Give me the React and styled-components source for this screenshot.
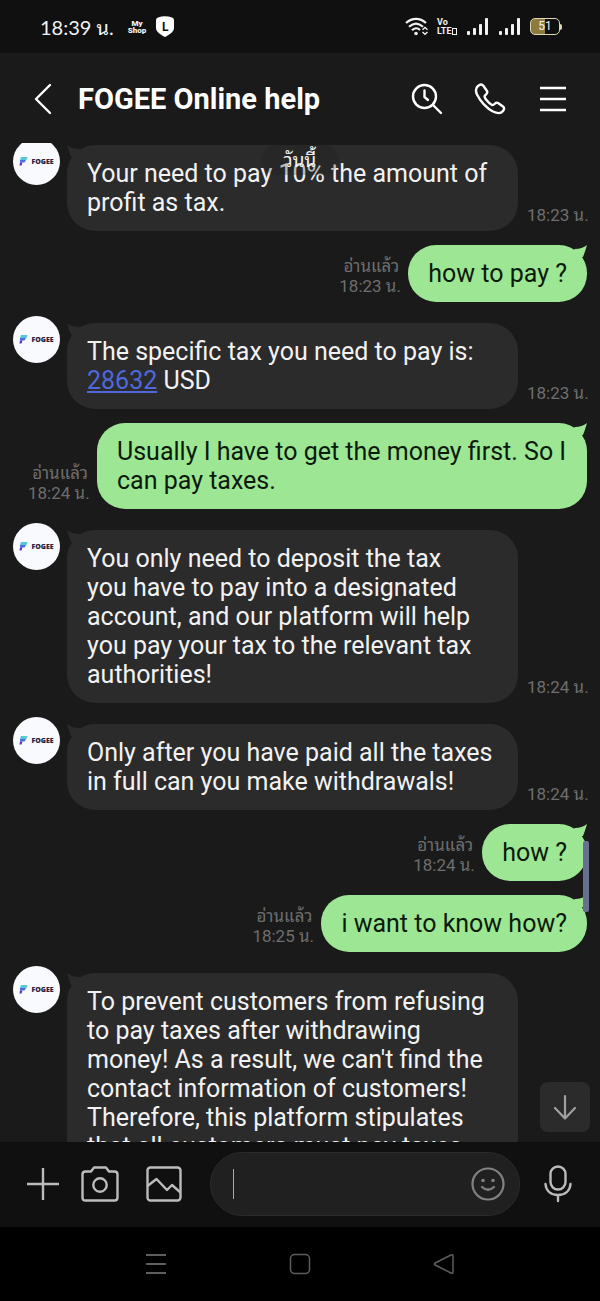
import React from "react";
import styled, { createGlobalStyle, css } from "styled-components";

const messages = [
  { id: 1, from: "them", time: "18:23 น.", text: "Your need to pay 10% the amount of profit as tax." },
  { id: 2, from: "me", time: "18:23 น.", text: "how to pay ?" },
  { id: 3, from: "them", time: "18:23 น.", text: "The specific tax you need to pay is: ", link: "28632", after: " USD" },
  { id: 4, from: "me", time: "18:24 น.", text: "Usually I have to get the money first. So I can pay taxes." },
  {
    id: 5,
    from: "them",
    time: "18:24 น.",
    text: "You only need to deposit the tax\nyou have to pay into a designated account, and our platform will help you pay your tax to the relevant tax authorities!",
  },
  { id: 6, from: "them", time: "18:24 น.", text: "Only after you have paid all the taxes in full can you make withdrawals!" },
  { id: 7, from: "me", time: "18:24 น.", text: "how ?" },
  { id: 8, from: "me", time: "18:25 น.", text: "i want to know how?" },
  {
    id: 9,
    from: "them",
    time: "18:25 น.",
    text: "To prevent customers from refusing to pay taxes after withdrawing money! As a result, we can't find the contact information of customers! Therefore, this platform stipulates that all customers must pay taxes",
  },
];

const Signal = () => (
  <svg width="23" height="18" viewBox="0 0 23 18" fill="#f2f2f2" aria-hidden="true">
    <rect x="1" y="13" width="3" height="4" rx="1" />
    <rect x="7" y="10" width="3" height="7" rx="1" />
    <rect x="13" y="6" width="3" height="11" rx="1" />
    <rect x="19" y="0" width="3" height="17" rx="1" />
  </svg>
);

const Wifi = () => (
  <svg width="23" height="19" viewBox="0 0 23 19" fill="none" stroke="#f2f2f2" strokeWidth="2.2" aria-hidden="true">
    <path d="M1 6C7 .4 15 .4 21 6" />
    <path d="M4 9.800C8.500 5.600 13.500 5.600 18 9.800" />
    <path d="M7 13.300C9.500 10.600 12.500 10.600 15 13" />
    <circle cx="11" cy="16.500" r="1.800" fill="#f2f2f2" stroke="none" />
    <path d="M17.500 12.700L20 10.500L22.500 12.700M17.500 15L20 17.200L22.500 15" strokeWidth="1.400" />
  </svg>
);

const Tail = ({ mine }) => (
  <TailSvg $mine={mine} width="20" height="16" viewBox="0 0 20 16" aria-hidden="true">
    {mine ? <path d="M6 6L8 4Q15 4 20 0Q18 7 16 12L8 12Z" /> : <path d="M14 6L12 4Q5 4 0 0Q2 7 4 12L12 12Z" />}
  </TailSvg>
);

const Logo = () => (
  <svg width="9" height="9" viewBox="0 0 9 9" aria-hidden="true">
    <path d="M2 0H8.500L7.500 3H1Z" fill="#54c8d8" />
    <path d="M1 3H7L5.500 5.500H1Z" fill="#4a6fe0" />
    <path d="M1 5.500H3.500L2.500 8.500H.5Z" fill="#5b32b8" />
  </svg>
);

const Message = ({ message }) => {
  const mine = message.from === "me";

  return (
    <Row $mine={mine}>
      {!mine && (
        <Avatar>
          <Logo />
          FOGEE
        </Avatar>
      )}
      <Bubble $mine={mine}>
        <Tail mine={mine} />
        {message.text}
        {message.link && <Link href={`#${message.link}`}>{message.link}</Link>}
        {message.after}
      </Bubble>
      <Meta $mine={mine}>
        {mine && <span>อ่านแล้ว</span>}
        <span>{message.time}</span>
      </Meta>
    </Row>
  );
};

const App = () => (
  <Page>
    <GlobalStyle />
    <StatusBar>
      <Clock>18:39 น.</Clock>
      <ShopMark>
        <span>My</span>
        <span>Shop</span>
      </ShopMark>
      <Shield>
        <svg width="18" height="21" viewBox="0 0 18 21" aria-hidden="true">
          <path d="M2 1.500Q9-1 16 1.500Q18 2 18 4V12C18 16 13 19 9 21C5 19 0 16 0 12V4Q0 2 2 1.500Z" fill="#fff" />
        </svg>
        <ShieldLetter>L</ShieldLetter>
      </Shield>
      <StatusIcons>
        <Wifi />
        <Volte>
          <span>Vo</span>
          <VolteLine>
            LTE
            <VolteBox />
          </VolteLine>
        </Volte>
        <Signal />
        <Signal />
        <Battery>
          <BatteryBody>51</BatteryBody>
          <BatteryTip />
        </Battery>
      </StatusIcons>
    </StatusBar>

    <Header>
      <IconButton aria-label="Back" $width={38}>
        <svg width="18" height="32" viewBox="0 0 18 32" fill="none" stroke="#fff" strokeWidth="2.4" strokeLinecap="round" strokeLinejoin="round">
          <path d="M16 2L2 16L16 30" />
        </svg>
      </IconButton>
      <Title>FOGEE Online help</Title>
      <HeaderActions>
        <IconButton aria-label="Search history" $width={32}>
          <svg width="32" height="32" viewBox="0 0 32 32" fill="none" stroke="#fff" strokeWidth="2.4" strokeLinecap="round" strokeLinejoin="round">
            <circle cx="13.500" cy="13.500" r="11.500" />
            <path d="M22 22L30 30M13.500 7.500V14L17 17" />
          </svg>
        </IconButton>
        <IconButton aria-label="Call" $width={32}>
          <svg width="32" height="32" viewBox="0 0 32 32" fill="none" stroke="#fff" strokeWidth="2.4" strokeLinejoin="round">
            <path d="M4 3C6.500 1 8 1 9.500 3L13 8C14 10 13 11 11 12.500C10 13.500 10.500 14.500 12 16.500C14 19 16 21 18 22C19.500 22.500 20 21.500 21 20.500C22 19.500 23 19.500 24 20L29 23.500C30.500 24.500 30.500 26 29 28C27 30.500 23 30.500 19 28.500C13 25.500 6 18 3 11.500C1.500 8 1.500 5 4 3Z" />
          </svg>
        </IconButton>
        <IconButton aria-label="Menu" $width={32}>
          <svg width="28" height="26" viewBox="0 0 28 26" fill="none" stroke="#fff" strokeWidth="2.4">
            <path d="M1 2H27M1 13H27M1 24H27" />
          </svg>
        </IconButton>
      </HeaderActions>
    </Header>

    <Chat>
      <DateBadge>วันนี้</DateBadge>
      <Messages>
        {messages.map((message) => (
          <Message key={message.id} message={message} />
        ))}
      </Messages>
      <ScrollThumb />
      <ScrollDown aria-label="Scroll to latest">
        <svg width="26" height="26" viewBox="0 0 26 26" fill="none" stroke="#a0a0a0" strokeWidth="2.2" strokeLinecap="round" strokeLinejoin="round">
          <path d="M13 2V24M3 14L13 24.500L23 14" />
        </svg>
      </ScrollDown>
    </Chat>

    <Composer>
      <Tools>
        <IconButton aria-label="Add" $width={36}>
          <svg width="34" height="34" viewBox="0 0 34 34" fill="none" stroke="#bcbcbc" strokeWidth="2.4">
            <path d="M17 1V33M1 17H33" />
          </svg>
        </IconButton>
        <IconButton aria-label="Camera" $width={38}>
          <svg width="38" height="36" viewBox="0 0 38 36" fill="none" stroke="#bcbcbc" strokeWidth="2.4" strokeLinejoin="round">
            <path d="M4.500 5.500H10L13 1.500H25L28 5.500H33.500Q36.500 5.500 36.500 8.500V31.500Q36.500 34.500 33.500 34.500H4.500Q1.500 34.500 1.500 31.500V8.500Q1.500 5.500 4.500 5.500Z" />
            <circle cx="19" cy="19" r="6.700" />
          </svg>
        </IconButton>
        <IconButton aria-label="Photos" $width={50}>
          <svg width="36" height="36" viewBox="0 0 36 36" fill="none" stroke="#bcbcbc" strokeWidth="2.4" strokeLinejoin="round">
            <rect x="1.500" y="1.500" width="33" height="33" rx="3" />
            <path d="M1.500 20L10.500 13L21 24L26 19L34.500 26.500" />
          </svg>
        </IconButton>
      </Tools>
      <InputWrap>
        <Caret />
        <Input type="text" aria-label="Message" />
        <IconButton aria-label="Emoji" $width={34}>
          <svg width="34" height="34" viewBox="0 0 34 34" fill="none" stroke="#828282" strokeWidth="2.2" strokeLinecap="round">
            <circle cx="17" cy="17" r="15.500" />
            <circle cx="12" cy="13.500" r="1.800" fill="#828282" stroke="none" />
            <circle cx="22" cy="13.500" r="1.800" fill="#828282" stroke="none" />
            <path d="M11 20Q17 25.500 23 20" />
          </svg>
        </IconButton>
      </InputWrap>
      <IconButton aria-label="Voice message" $width={30}>
        <svg width="28" height="38" viewBox="0 0 28 38" fill="none" stroke="#bcbcbc" strokeWidth="2.4" strokeLinecap="round">
          <rect x="6.500" y="1.500" width="15" height="23" rx="7.500" />
          <path d="M1.500 19C2 26 7 30 14 30C21 30 26 26 26.500 19M14 30V36" />
        </svg>
      </IconButton>
    </Composer>

    <NavBar>
      <IconButton aria-label="Recent apps" $width={24}>
        <svg width="22" height="22" viewBox="0 0 22 22" fill="none" stroke="#5e5e5e" strokeWidth="2">
          <path d="M1 2H21M1 11H21M1 20H21" />
        </svg>
      </IconButton>
      <IconButton aria-label="Home" $width={24}>
        <svg width="22" height="22" viewBox="0 0 22 22" fill="none" stroke="#5e5e5e" strokeWidth="1.500">
          <rect x="1.500" y="1.500" width="19" height="19" rx="4" />
        </svg>
      </IconButton>
      <IconButton aria-label="Back to previous screen" $width={24}>
        <svg width="22" height="22" viewBox="0 0 22 22" fill="none" stroke="#5e5e5e" strokeWidth="1.500" strokeLinejoin="round">
          <path d="M2 10Q1 11 2 12L18 20Q20 21 20 19V3Q20 1 18 2Z" />
        </svg>
      </IconButton>
    </NavBar>
  </Page>
);

const GlobalStyle = createGlobalStyle`
  * {
    box-sizing: border-box;
  }

  body {
    margin: 0;
    background: #1a1a1a;
    font-family: Roboto, "Noto Sans Thai Looped", "Noto Sans", sans-serif;
  }
`;

const Page = styled.div`
  display: flex;
  flex-direction: column;
  height: 100vh;
  color: #f2f2f2;
`;

const StatusBar = styled.div`
  display: flex;
  align-items: center;
  height: 53px;
  padding: 0 38px 0 40px;
  background: #101010;
`;

const Clock = styled.time`
  font-family: Lato, "Noto Sans Thai Looped", sans-serif;
  font-size: 20px;
  line-height: 24px;
`;

const ShopMark = styled.div`
  display: flex;
  flex-direction: column;
  align-items: center;
  margin-left: 14px;
  font-size: 8px;
  font-weight: 900;
  line-height: 7px;
`;

const Shield = styled.div`
  display: grid;
  place-items: center;
  margin-left: 10px;

  > * {
    grid-area: 1 / 1;
  }
`;

const ShieldLetter = styled.span`
  color: #101010;
  font-size: 12px;
  font-weight: 700;
  line-height: 12px;
`;

const StatusIcons = styled.div`
  display: flex;
  align-items: center;
  gap: 9px;
  margin-left: auto;
`;

const Volte = styled.div`
  display: flex;
  flex-direction: column;
  width: 20px;
  font-size: 9px;
  font-weight: 700;
  line-height: 9px;
`;

const VolteLine = styled.span`
  display: flex;
  align-items: center;
`;

const VolteBox = styled.span`
  width: 5px;
  height: 7px;
  border: 1px solid #f2f2f2;
`;

const Battery = styled.div`
  display: flex;
  align-items: center;
`;

const BatteryBody = styled.div`
  width: 30px;
  height: 17px;
  border: 1px solid #ddd6b8;
  border-radius: 5px;
  background: linear-gradient(90deg, #8d7b3e 50%, transparent 50%);
  font-size: 12px;
  line-height: 15px;
  text-align: center;
`;

const BatteryTip = styled.div`
  width: 2px;
  height: 6px;
  border-radius: 0 2px 2px 0;
  background: #ddd6b8;
`;

const Header = styled.header`
  display: flex;
  align-items: center;
  height: 90px;
  padding: 2px 31px 0 24px;
`;

const IconButton = styled.button`
  display: flex;
  flex: none;
  align-items: center;
  justify-content: center;
  width: ${({ $width }) => $width}px;
  height: 40px;
  padding: 0;
  border: 0;
  background: none;
`;

const Title = styled.h1`
  margin: 0 0 0 16px;
  color: #fff;
  font-size: 29px;
  font-weight: 700;
`;

const HeaderActions = styled.div`
  display: flex;
  gap: 31px;
  margin-left: auto;
`;

const Chat = styled.main`
  position: relative;
  flex: 1;
  min-height: 0;
  overflow: hidden;
`;

const Messages = styled.div`
  display: flex;
  flex-direction: column;
  gap: 14px;
  margin-top: -5px;
  padding: 0 13px;
`;

const DateBadge = styled.div`
  position: absolute;
  z-index: 1;
  top: 2px;
  left: 50%;
  width: 76px;
  height: 30px;
  border-radius: 15px;
  background: rgba(26, 26, 26, 0.25);
  font-size: 19px;
  line-height: 32px;
  text-align: center;
  transform: translateX(-50%);
`;

const Row = styled.div`
  display: flex;
  flex-direction: ${({ $mine }) => ($mine ? "row-reverse" : "row")};
`;

const Avatar = styled.div`
  display: flex;
  flex: none;
  align-items: center;
  justify-content: center;
  gap: 3px;
  width: 47px;
  height: 47px;
  margin-right: 7px;
  border-radius: 50%;
  background: #f8fafe;
  color: #2a2340;
  font-family: "Noto Sans", sans-serif;
  font-size: 7px;
  font-weight: 900;
`;

const Bubble = styled.div`
  position: relative;
  padding: 14px 20px;
  border-radius: 28px;
  font-size: 25px;
  line-height: 29px;
  white-space: pre-line;

  ${({ $mine }) =>
    $mine
      ? css`
          max-width: 490px;
          background: #9de693;
          color: #0c1a0b;
        `
      : css`
          flex: 1;
          margin-top: 7px;
          background: #2b2b2b;
        `}
`;

const TailSvg = styled.svg`
  position: absolute;
  top: 0;
  ${({ $mine }) => ($mine ? "right: 0;" : "left: 0;")}
  fill: ${({ $mine }) => ($mine ? "#9de693" : "#2b2b2b")};
`;

const Link = styled.a`
  color: #4f68dc;
`;

const Meta = styled.div`
  display: flex;
  flex: none;
  flex-direction: column;
  justify-content: flex-end;
  width: 60px;
  margin: ${({ $mine }) => ($mine ? "0 9px 0 0" : "0 0 0 9px")};
  padding-bottom: 6px;
  color: #6e6e6e;
  font-size: 17px;
  line-height: 20px;
  text-align: right;
  white-space: nowrap;
`;

const ScrollThumb = styled.div`
  position: absolute;
  top: 698px;
  right: 11px;
  width: 6px;
  height: 71px;
  border-radius: 2px;
  background: #68708f;
`;

const ScrollDown = styled.button`
  position: absolute;
  right: 10px;
  bottom: 10px;
  display: grid;
  place-items: center;
  width: 50px;
  height: 50px;
  padding: 0;
  border: 0;
  border-radius: 8px;
  background: #2b2b2b;
`;

const Composer = styled.footer`
  display: flex;
  align-items: center;
  height: 85px;
  padding: 0 27px 2px 25px;
  background: #101010;
`;

const Tools = styled.div`
  display: flex;
  gap: 20px;
`;

const InputWrap = styled.div`
  display: flex;
  flex: 1;
  align-items: center;
  min-width: 0;
  height: 64px;
  margin: 0 23px 0 21px;
  padding: 0 14px 0 22px;
  border: 1px solid #2b2b2b;
  border-radius: 32px;
  background: #202020;
`;

const Caret = styled.span`
  width: 1px;
  height: 30px;
  background: #a8a8a8;
`;

const Input = styled.input`
  flex: 1;
  min-width: 0;
  border: 0;
  outline: 0;
  background: none;
  color: #f2f2f2;
  font: inherit;
  font-size: 25px;
`;

const NavBar = styled.nav`
  display: flex;
  align-items: center;
  justify-content: center;
  gap: 120px;
  height: 74px;
  background: #000;
`;

export default App;
